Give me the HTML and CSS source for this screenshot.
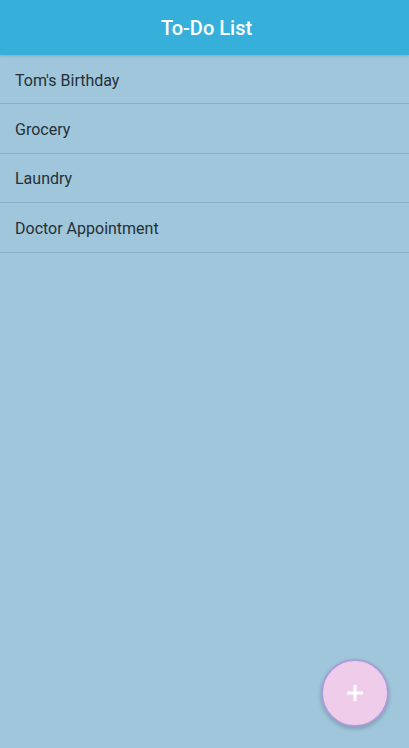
FILE: index.html
```html
<!DOCTYPE html>
<html>
<head>
<meta charset="utf-8">
<link rel="stylesheet" href="styles.css">
</head>
<body>
<div class="app">
  <header class="header">To-Do List</header>
  <ul class="list">
    <li class="item">Tom's Birthday</li>
    <li class="item">Grocery</li>
    <li class="item">Laundry</li>
    <li class="item">Doctor Appointment</li>
  </ul>
  <button class="fab" aria-label="Add">
    <svg width="18" height="18" viewBox="0 0 18 18"><path d="M9 1v16M1 9h16" stroke="#fff" stroke-width="3"/></svg>
  </button>
</div>
</body>
</html>
```
FILE: styles.css
```css
html, body {
  margin: 0;
  padding: 0;
  height: 100%;
}
body {
  font-family: Roboto, "Noto Sans", sans-serif;
  background: #9fc6da;
}
.app {
  position: relative;
  height: 748px;
  overflow: hidden;
  background: #9fc6da;
}
.header {
  height: 55px;
  background: #36b0da;
  color: #fff;
  font-size: 20px;
  font-weight: 500;
  display: flex;
  align-items: center;
  justify-content: center;
  padding-top: 1px;
  padding-left: 4px;
  box-sizing: border-box;
  box-shadow: 0 1px 3px rgba(0,0,0,0.15);
  position: relative;
  z-index: 1;
}
.list {
  list-style: none;
  margin: 0;
  padding: 0;
}
.item {
  display: flex;
  align-items: center;
  padding-left: 15px;
  padding-top: 2px;
  box-sizing: border-box;
  height: 49.4px;
  font-size: 16px;
  color: #263036;
  border-bottom: 1px solid #89b0c5;
}
.fab {
  position: absolute;
  left: 321px;
  top: 659px;
  width: 68px;
  height: 68px;
  border-radius: 50%;
  border: 2px solid #a79fdc;
  background: #efcdea;
  box-sizing: border-box;
  display: flex;
  align-items: center;
  justify-content: center;
  padding: 0;
  box-shadow: 0 2px 4px rgba(0,0,0,0.2);
}
```
